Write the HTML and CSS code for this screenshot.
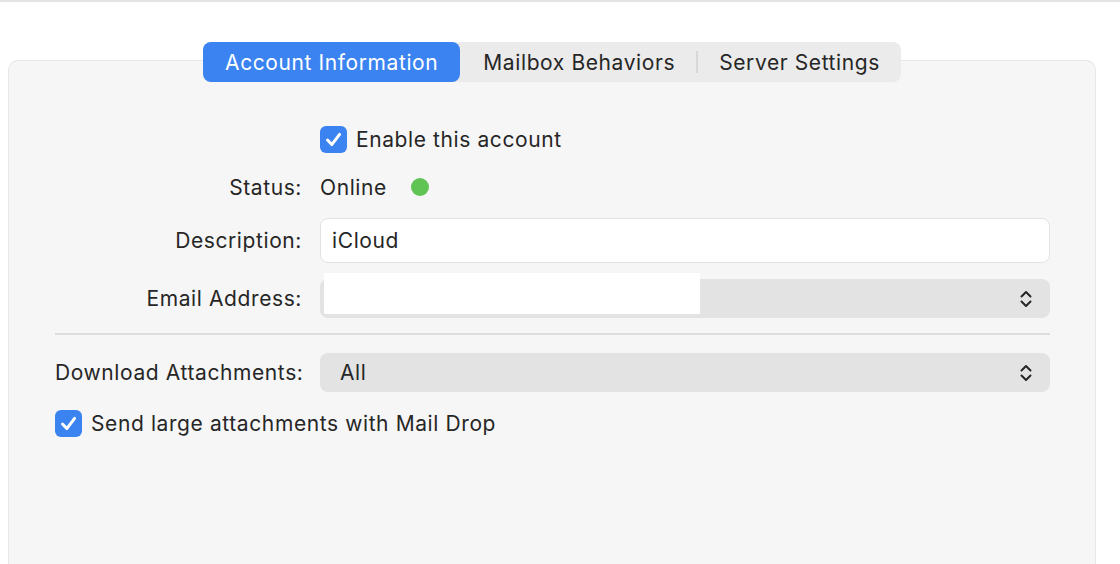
FILE: index.html
```html
<!DOCTYPE html>
<html lang="en">
  <head>
    <meta charset="UTF-8" />
    <meta name="viewport" content="width=device-width, initial-scale=1.0" />
    <title>Accounts</title>
    <link rel="stylesheet" href="styles.css">
  </head>
  <body>
    <div class="topline"></div>

    <div class="pane">
      <!-- segmented tabs over the pane edge -->
      <div class="tabs">
        <span class="tab active">Account Information</span>
        <span class="tab">Mailbox Behaviors</span>
        <span class="sep"></span>
        <span class="tab">Server Settings</span>
      </div>

      <div class="form">
        <div class="row r-enable">
          <span></span>
          <label class="check">
            <span class="box">
              <svg width="27" height="27" viewBox="0 0 27 27"><path d="M7.5 14 L11.8 18.6 L19.6 8.4" fill="none" stroke="#fff" stroke-width="3" stroke-linecap="round" stroke-linejoin="round"/></svg>
            </span>
            Enable this account
          </label>
        </div>

        <div class="row r-status">
          <span class="label">Status:</span>
          <span class="value">Online <i class="dot"></i></span>
        </div>

        <div class="row r-desc">
          <span class="label">Description:</span>
          <div class="field">iCloud</div>
        </div>

        <div class="row r-email">
          <span class="label">Email Address:</span>
          <div class="popup">
            <span class="redact"></span>
            <svg class="updown" width="14" height="18" viewBox="0 0 14 18"><path d="M2.5 6.5 L7 2 L11.5 6.5 M2.5 11.5 L7 16 L11.5 11.5" fill="none" stroke="#262626" stroke-width="2" stroke-linecap="round" stroke-linejoin="round"/></svg>
          </div>
        </div>

        <hr class="divider">

        <div class="row r-download">
          <span class="label">Download Attachments:</span>
          <div class="popup">
            <span class="choice">All</span>
            <svg class="updown" width="14" height="18" viewBox="0 0 14 18"><path d="M2.5 6.5 L7 2 L11.5 6.5 M2.5 11.5 L7 16 L11.5 11.5" fill="none" stroke="#262626" stroke-width="2" stroke-linecap="round" stroke-linejoin="round"/></svg>
          </div>
        </div>

        <label class="check r-maildrop">
          <span class="box">
            <svg width="27" height="27" viewBox="0 0 27 27"><path d="M7.5 14 L11.8 18.6 L19.6 8.4" fill="none" stroke="#fff" stroke-width="3" stroke-linecap="round" stroke-linejoin="round"/></svg>
          </span>
          Send large attachments with Mail Drop
        </label>
      </div>
    </div>
  </body>
</html>
```

FILE: styles.css
```css
body {
  margin: 0;
  background: #fff;
  font-family: Inter, "Noto Sans", sans-serif;
  font-size: 21px;
  letter-spacing: 0.6px;
  color: #262626;
  overflow: hidden;
}
.topline {
  height: 2px;
  background: #e4e4e4;
}
.pane {
  margin: 58px 0 0 8px;
  width: 1088px;
  height: 504px;
  background: #f6f6f6;
  border: 1px solid #e6e6e6;
  border-bottom: 0;
  border-radius: 10px 10px 0 0;
  box-sizing: border-box;
}
.tabs {
  display: flex;
  align-items: center;
  width: fit-content;
  height: 40px;
  margin: -19px auto 0;
  background: #ebebeb;
  border-radius: 8px;
}
.tab {
  padding: 1px 21px 0;
  line-height: 39px;
  white-space: nowrap;
}
.tab.active {
  padding: 1px 22px 0;
  background: #3a83f1;
  color: #fff;
  border-radius: 8px;
  margin-right: 2px;
}
.sep {
  width: 2px;
  height: 22px;
  background: #d7d7d7;
}
.form {
  padding: 0 45px 0 46px;
}
.row {
  display: grid;
  grid-template-columns: 247px 730px;
  column-gap: 18px;
  align-items: center;
}
.label {
  text-align: right;
  white-space: nowrap;
}
.r-enable { margin-top: 44px; height: 27px; }
.r-status { margin-top: 19px; height: 30px; }
.r-desc { margin-top: 16px; }
.r-email { margin-top: 16px; }
.r-download { margin-top: 18px; }
.r-maildrop { margin-top: 18px; }
.check {
  display: flex;
  align-items: center;
  gap: 9px;
  white-space: nowrap;
}
.box {
  width: 27px;
  height: 27px;
  border-radius: 6px;
  background: #3a83f1;
  display: block;
}
.box svg { display: block; }
.value {
  display: flex;
  align-items: center;
}
.dot {
  width: 18px;
  height: 18px;
  border-radius: 50%;
  background: #5fc454;
  margin-left: 24px;
}
.field {
  height: 45px;
  box-sizing: border-box;
  background: #fff;
  border: 1px solid #e2e2e2;
  border-radius: 8px;
  padding: 0 11px;
  line-height: 43px;
}
.popup {
  position: relative;
  height: 39px;
  background: #e3e3e3;
  border-radius: 8px;
  display: flex;
  align-items: center;
}
.choice {
  padding-left: 20px;
}
.updown {
  position: absolute;
  right: 17px;
  top: 11px;
}
.redact {
  position: absolute;
  left: 4px;
  top: -6px;
  width: 376px;
  height: 41px;
  background: #fff;
}
.divider {
  margin: 15px 0 0;
  width: 995px;
  height: 2px;
  border: 0;
  background: #dddddd;
}
```
